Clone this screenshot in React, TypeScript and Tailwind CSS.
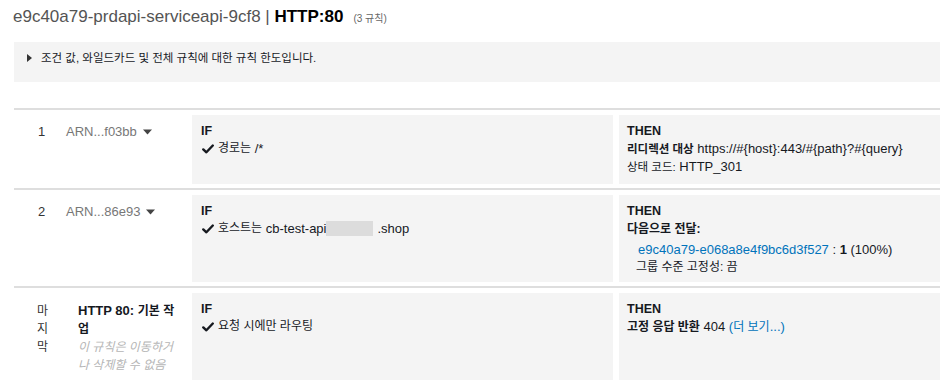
import React from "react";

const K = ({ children, className = "" }: { children: React.ReactNode; className?: string }) => (
  <span className={"text-[12px] " + className}>{children}</span>
);

const Check = () => (
  <svg width="12" height="10" viewBox="0 0 12 10" className="shrink-0 mr-[4px] ml-[1px]">
    <path d="M1.3 5.4 L4.4 8.3 L10.8 1.5" fill="none" stroke="#16191f" strokeWidth="2.4" strokeLinecap="round" strokeLinejoin="round" />
  </svg>
);

const Caret = () => (
  <svg width="9" height="6" viewBox="0 0 9 6" className="ml-[6px]">
    <path d="M0 0.5 L9 0.5 L4.5 5.5 Z" fill="#444" />
  </svg>
);

export default function App() {
  return (
    <div className="w-[940px] h-[392px] overflow-hidden bg-white font-['Liberation_Sans','Noto_Sans_CJK_KR',sans-serif] text-[13px] text-[#16191f] pl-[14px]">
      {/* Title */}
      <div className="h-[42px] pt-[7px] -ml-[1px] flex items-baseline leading-[20px] whitespace-pre">
        <span className="text-[17px] text-[#545454]">e9c40a79-prdapi-serviceapi-9cf8 | </span>
        <span className="text-[17px] font-bold text-black">HTTP:80</span>
        <span className="ml-[10px] text-[10px] text-[#666]">(3 규칙)</span>
      </div>

      {/* Info box */}
      <div className="h-[40px] bg-[#f4f4f4] pt-[8px] pl-[13px] flex items-start leading-[16px]">
        <svg width="5" height="8" viewBox="0 0 5 8" className="mt-[4px] shrink-0">
          <path d="M0 0 L5 4 L0 8 Z" fill="#333" />
        </svg>
        <span className="ml-[9px] text-[11.5px] text-[#16191f]">
          조건 값, 와일드카드 및 전체 규칙에 대한 규칙 한도입니다.
        </span>
      </div>

      {/* Rows */}
      <div className="mt-[26px]">
        {/* Row 1 */}
        <div className="border-t-2 border-[#dedede] pt-[5px] pb-[4px] flex">
          <div className="w-[178px] shrink-0 pl-[24px] pt-[8px] leading-[17px] flex items-start">
            <span className="w-[28px] text-[#333]">1</span>
            <span className="text-[#777]">ARN...f03bb</span>
            <span className="mt-[6px]"><Caret /></span>
          </div>
          <div className="w-[421px] h-[69px] shrink-0 bg-[#f4f4f4] pl-[9px] pt-[8px] leading-[17px]">
            <div className="font-bold text-[12.5px]">IF</div>
            <div className="flex items-center">
              <Check />
              <K>경로는</K>&nbsp;/*
            </div>
          </div>
          <div className="ml-[6px] flex-1 bg-[#f4f4f4] pl-[8px] pt-[8px] leading-[17px]">
            <div className="font-bold text-[12.5px]">THEN</div>
            <div>
              <span className="font-bold text-[11.5px]">리디렉션 대상</span> https://#&#123;host&#125;:443/#&#123;path&#125;?#&#123;query&#125;
            </div>
            <div>
              <span className="text-[11.5px]">상태 코드:</span> HTTP_301
            </div>
          </div>
        </div>

        {/* Row 2 */}
        <div className="border-t-2 border-[#dedede] pt-[5px] pb-[4px] flex">
          <div className="w-[178px] shrink-0 pl-[24px] pt-[8px] leading-[17px] flex items-start">
            <span className="w-[28px] text-[#333]">2</span>
            <span className="text-[#777]">ARN...86e93</span>
            <span className="mt-[6px]"><Caret /></span>
          </div>
          <div className="w-[421px] h-[87px] shrink-0 bg-[#f4f4f4] pl-[9px] pt-[8px] leading-[17px]">
            <div className="font-bold text-[12.5px]">IF</div>
            <div className="flex items-center">
              <Check />
              <K>호스트는</K>&nbsp;cb-test-api
              <span className="inline-block w-[47px] h-[15px] bg-[#dcdcdc] mr-[4px]" />
              .shop
            </div>
          </div>
          <div className="ml-[6px] flex-1 bg-[#f4f4f4] pl-[8px] pt-[8px] leading-[17px]">
            <div className="font-bold text-[12.5px]">THEN</div>
            <div>
              <K className="font-bold">다음으로 전달:</K>
            </div>
            <div className="pl-[11px] mt-[3px]">
              <span className="text-[#0073bb]">e9c40a79-e068a8e4f9bc6d3f527</span> : <span className="font-bold">1</span> (100%)
            </div>
            <div className="pl-[9px] leading-[18px]">
              <K>그룹 수준 고정성: 끔</K>
            </div>
          </div>
        </div>

        {/* Row 3 */}
        <div className="border-t-2 border-[#dedede] pt-[5px] pb-[4px] flex">
          <div className="w-[178px] shrink-0 pl-[23px] pt-[9px] leading-[18px] flex items-start">
            <div className="w-[14px] break-all text-[#333]">
              <K>마지막</K>
            </div>
            <div className="ml-[27px] w-[102px]">
              <div className="font-bold">
                HTTP 80: <K>기본 작</K>
                <K>업</K>
              </div>
              <div className="italic text-[#b5b5b5]">
                <K>이 규칙은 이동하거</K>
                <K>나 삭제할 수 없음</K>
              </div>
            </div>
          </div>
          <div className="w-[421px] h-[87px] shrink-0 bg-[#f4f4f4] pl-[9px] pt-[8px] leading-[17px]">
            <div className="font-bold text-[12.5px]">IF</div>
            <div className="flex items-center">
              <Check />
              <K>요청 시에만 라우팅</K>
            </div>
          </div>
          <div className="ml-[6px] flex-1 bg-[#f4f4f4] pl-[8px] pt-[8px] leading-[17px]">
            <div className="font-bold text-[12.5px]">THEN</div>
            <div>
              <K className="font-bold">고정 응답 반환</K> 404 <span className="text-[#0073bb]">(<K>더 보기</K>...)</span>
            </div>
          </div>
        </div>
      </div>
    </div>
  );
}
